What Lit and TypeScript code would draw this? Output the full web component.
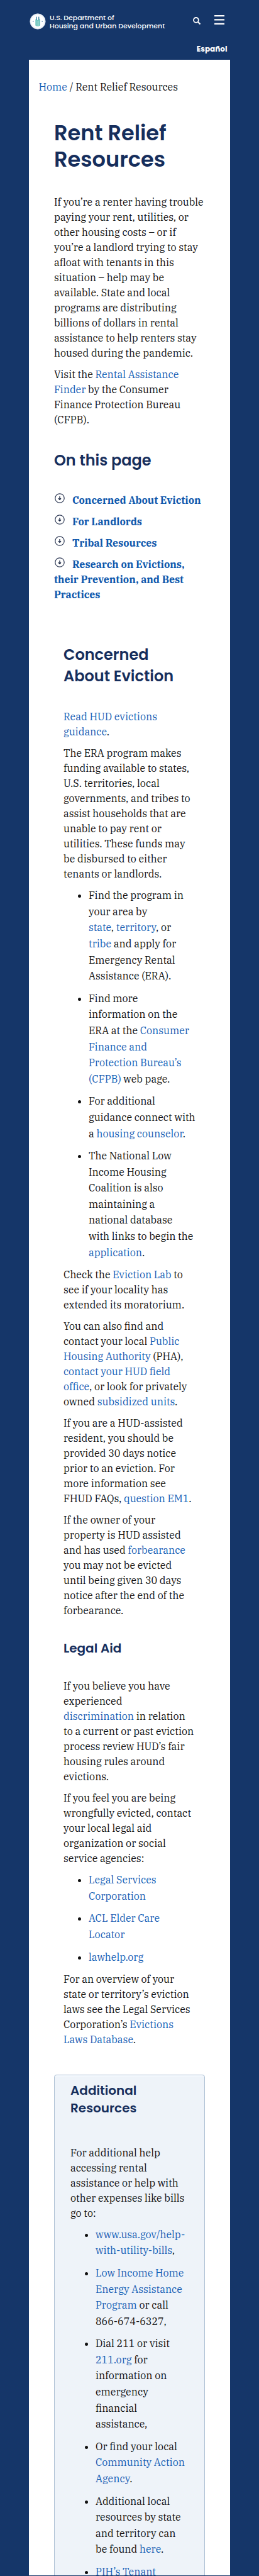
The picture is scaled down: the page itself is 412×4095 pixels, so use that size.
import { LitElement, html, css, svg, TemplateResult } from "lit";
import { customElement } from "lit/decorators.js";

type Line = TemplateResult | string;

const a = (t: string) => html`<a class="link" href="#">${t}</a>`;

const intro: Line[][] = [
  [
    "If you’re a renter having trouble",
    "paying your rent, utilities, or",
    "other housing costs – or if",
    "you’re a landlord trying to stay",
    "afloat with tenants in this",
    "situation – help may be",
    "available. State and local",
    "programs are distributing",
    "billions of dollars in rental",
    "assistance to help renters stay",
    "housed during the pandemic.",
  ],
  [
    html`Visit the ${a("Rental Assistance")}`,
    html`${a("Finder")} by the Consumer`,
    "Finance Protection Bureau",
    "(CFPB).",
  ],
];

const jump: Line[][] = [
  ["Concerned About Eviction"],
  ["For Landlords"],
  ["Tribal Resources"],
  ["Research on Evictions,", "their Prevention, and Best", "Practices"],
];

const era: Line[][] = [
  [a("Read HUD evictions"), html`${a("guidance")}.`],
  [
    "The ERA program makes",
    "funding available to states,",
    "U.S. territories, local",
    "governments, and tribes to",
    "assist households that are",
    "unable to pay rent or",
    "utilities. These funds may",
    "be disbursed to either",
    "tenants or landlords.",
  ],
];

const eraList: Line[][] = [
  [
    "Find the program in",
    "your area by",
    html`${a("state")}, ${a("territory")}, or`,
    html`${a("tribe")} and apply for`,
    "Emergency Rental",
    "Assistance (ERA).",
  ],
  [
    "Find more",
    "information on the",
    html`ERA at the ${a("Consumer")}`,
    a("Finance and"),
    a("Protection Bureau’s"),
    html`${a("(CFPB)")} web page.`,
  ],
  ["For additional", "guidance connect with", html`a ${a("housing counselor")}.`],
  [
    "The National Low",
    "Income Housing",
    "Coalition is also",
    "maintaining a",
    "national database",
    "with links to begin the",
    html`${a("application")}.`,
  ],
];

const tenants: Line[][] = [
  [html`Check the ${a("Eviction Lab")} to`, "see if your locality has", "extended its moratorium."],
  [
    "You can also find and",
    html`contact your local ${a("Public")}`,
    html`${a("Housing Authority")} (PHA),`,
    a("contact your HUD field"),
    html`${a("office")}, or look for privately`,
    html`owned ${a("subsidized units")}.`,
  ],
  [
    "If you are a HUD-assisted",
    "resident, you should be",
    "provided 30 days notice",
    "prior to an eviction. For",
    "more information see",
    html`FHUD FAQs, ${a("question EM1")}.`,
  ],
  [
    "If the owner of your",
    "property is HUD assisted",
    html`and has used ${a("forbearance")}`,
    "you may not be evicted",
    "until being given 30 days",
    "notice after the end of the",
    "forbearance.",
  ],
];

const legal: Line[][] = [
  [
    "If you believe you have",
    "experienced",
    html`${a("discrimination")} in relation`,
    "to a current or past eviction",
    "process review HUD’s fair",
    "housing rules around",
    "evictions.",
  ],
  [
    "If you feel you are being",
    "wrongfully evicted, contact",
    "your local legal aid",
    "organization or social",
    "service agencies:",
  ],
];

const legalList: Line[][] = [
  [a("Legal Services"), a("Corporation")],
  [a("ACL Elder Care"), a("Locator")],
  [a("lawhelp.org")],
];

const overview: Line[][] = [
  [
    "For an overview of your",
    "state or territory’s eviction",
    "laws see the Legal Services",
    html`Corporation’s ${a("Evictions")}`,
    html`${a("Laws Database")}.`,
  ],
];

const help: Line[][] = [
  [
    "For additional help",
    "accessing rental",
    "assistance or help with",
    "other expenses like bills",
    "go to:",
  ],
];

const helpList: Line[][] = [
  [a("www.usa.gov/help-"), html`${a("with-utility-bills")},`],
  [a("Low Income Home"), a("Energy Assistance"), html`${a("Program")} or call`, "866-674-6327,"],
  [
    "Dial 211 or visit",
    html`${a("211.org")} for`,
    "information on",
    "emergency",
    "financial",
    "assistance,",
  ],
  ["Or find your local", a("Community Action"), html`${a("Agency")}.`],
  [
    "Additional local",
    "resources by state",
    "and territory can",
    html`be found ${a("here")}.`,
  ],
  [a("PIH’s Tenant")],
];

const lines = (ls: Line[]) => ls.map((t) => html`<span class="line">${t}</span>`);
const paras = (ps: Line[][]) => ps.map((p) => html`<p class="para">${lines(p)}</p>`);
const list = (ps: Line[][]) =>
  html`<ul class="list">${ps.map((p) => html`<li class="item">${lines(p)}</li>`)}</ul>`;

const seal = svg`
  <circle cx="13" cy="13" r="12.2" fill="#fff" stroke="#c3d2e2" stroke-width=".8"/>
  <circle cx="13" cy="13" r="10.6" fill="none" stroke="#e0eaf2" stroke-width=".6"/>
  <path d="M9.3 19.6V10.2L10.6 8.4V5.4l1.3 1.4v4h2.2v-4l1.3-1.4v3l1.5 1.8v9.4l-2 1.2h-3.6z" fill="#6fc6c0"/>
  <path d="M11.4 5.6v5M14.7 5.6v5" stroke="#2c6b9a" stroke-width=".9"/>
  <path d="M12 12v8M14.4 12v8" stroke="#a5dcd4" stroke-width=".8"/>
  <circle cx="5.8" cy="13" r=".9" fill="#7aa0c4"/><circle cx="20.2" cy="13" r=".9" fill="#7aa0c4"/>`;

const down = html`<svg class="down" viewBox="0 0 16 16" width="16" height="16">
  <circle cx="8" cy="8" r="7.2" fill="none" stroke="#2f3a55" stroke-width="1.2"/>
  <path d="M8 5v5M6 8.2l2 2.2 2-2.2" fill="none" stroke="#16233f" stroke-width="1.3"/>
</svg>`;

@customElement("app-root")
export class AppRoot extends LitElement {
  static styles = css`
    :host {
      display: block;
      box-sizing: border-box;
      height: 4095px;
      overflow: hidden;
      background: #153669;
      padding: 0 46px 1px;
      color: #111;
      font: 16px/24px "IBM Plex Serif", "DejaVu Serif Condensed", "Liberation Serif", serif;
    }
    .line { display: block; white-space: nowrap; }
    .header { box-sizing: border-box; height: 95px; display: flex; flex-direction: column; font-family: Poppins, Inter, sans-serif; color: #fff; }
    .bar { display: flex; padding: 21px 9px 0 1px; height: 29px; }
    .brand { display: flex; gap: 6px; color: #fff; text-decoration: none; }
    .name { font-size: 10.95px; line-height: 13px; font-weight: 500; padding-top: 1px; }
    .tools { display: flex; margin-left: auto; gap: 22px; }
    .search { margin-top: 6px; }
    .menu { margin-top: 3px; }
    .lang { display: flex; justify-content: flex-end; padding: 20px 4.5px 0 0; font-size: 12px; line-height: 16px; font-weight: 700; }
    .page { background: #fff; height: 3999px; overflow: hidden; display: flow-root; }
    .crumbs { margin: 30.6px 0 0 15.5px; line-height: 24px; }
    h1, h2, h3 { margin: 0; font-family: Poppins, Inter, sans-serif; color: #162e5c; font-weight: 600; }
    h1 { margin: 41px 0 34.2px 40px; font-size: 33.6px; line-height: 42.2px; }
    h2 { font-size: 24px; line-height: 34px; }
    h3 { font-size: 20px; line-height: 28px; }
    .lead { padding-left: 40px; }
    .lead h2 { margin: 36px 0 34px; }
    .para { margin: 0 0 10px; }
    .jump { margin: 0; padding: 0; list-style: none; font-weight: 700; }
    .jump .line { color: #0d57ac; }
    .entry { margin-bottom: 10px; }
    .first { display: flex; }
    .down { flex: none; width: 16px; height: 16px; margin: 1px 12.5px 0 .5px; }
    .section { padding-left: 55px; }
    .section h2 { margin: 67px 0 35px; }
    .section h3 { margin: 33.5px 0 34.5px; }
    .list { margin: 0; padding: 0 0 0 40px; line-height: 25.6px; }
    .item { margin-bottom: 10px; }
    .link { color: #1660b5; text-decoration: none; }
    .card { margin: 44px 40px 0; border: 1px solid #adc0d4; border-radius: 4px 4px 0 0; background: #eef3f9; padding: 10px 0 0 25px; height: 900px; box-sizing: border-box; box-shadow: inset 0 2px 0 #f4f9fd; }
    .card h3 { margin: 0 0 44.5px; }
  `;

  render() {
    return html`
      <header class="header">
        <div class="bar">
          <a class="brand" href="#">
            <svg viewBox="0 0 26 26" width="26" height="26">${seal}</svg>
            <span class="name">
              <span class="line">U.S. Department of</span>
              <span class="line">Housing and Urban Development</span>
            </span>
          </a>
          <div class="tools">
            <svg class="search" viewBox="0 0 12 12" width="12" height="12">
              <circle cx="4.9" cy="4.9" r="3.9" fill="none" stroke="#fff" stroke-width="1.8"/>
              <path d="m7.8 7.8 3.7 3.7" stroke="#fff" stroke-width="2.1"/>
            </svg>
            <svg class="menu" viewBox="0 0 16 16" width="16" height="16">
              <path d="M0 1.2h16M0 7.4h16M0 13.8h16" stroke="#fff" stroke-width="2.2"/>
            </svg>
          </div>
        </div>
        <div class="lang">Español</div>
      </header>
      <main class="page">
        <nav class="crumbs">${a("Home")} / Rent Relief Resources</nav>
        <h1><span class="line">Rent Relief</span><span class="line">Resources</span></h1>
        <div class="lead">
          ${paras(intro)}
          <h2>On this page</h2>
          <ul class="jump">
            ${jump.map(
              (j) => html`<li class="entry">
                <div class="first">${down}${lines(j.slice(0, 1))}</div>
                ${lines(j.slice(1))}
              </li>`
            )}
          </ul>
        </div>
        <section class="section">
          <h2><span class="line">Concerned</span><span class="line">About Eviction</span></h2>
          ${paras(era)} ${list(eraList)} ${paras(tenants)}
          <h3>Legal Aid</h3>
          ${paras(legal)} ${list(legalList)} ${paras(overview)}
        </section>
        <aside class="card">
          <h3><span class="line">Additional</span><span class="line">Resources</span></h3>
          ${paras(help)} ${list(helpList)}
        </aside>
      </main>
    `;
  }
}
